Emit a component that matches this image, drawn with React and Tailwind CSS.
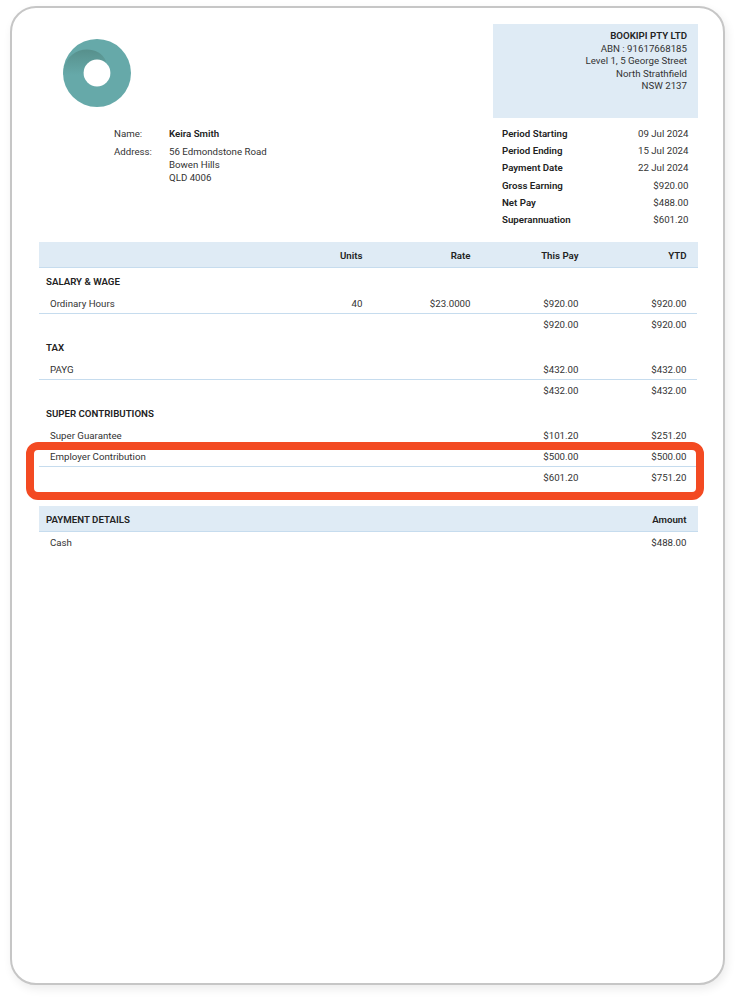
import React from 'react'

const summary = [
  ['Period Starting', '09 Jul 2024'],
  ['Period Ending', '15 Jul 2024'],
  ['Payment Date', '22 Jul 2024'],
  ['Gross Earning', '$920.00'],
  ['Net Pay', '$488.00'],
  ['Superannuation', '$601.20'],
]

const cols = 'grid grid-cols-[215.5px_108px_108px_108px_108px] items-center text-right'

function Logo() {
  return (
    <svg width="68" height="68" viewBox="0 0 68 68">
      <defs>
        <linearGradient id="shade" x1="0" y1="0" x2="0" y2="1">
          <stop offset="0" stopColor="#57908c" />
          <stop offset="1" stopColor="#66a9a9" />
        </linearGradient>
      </defs>
      <circle cx="34" cy="34" r="34" fill="#66a9a9" />
      <path d="M0.6 30C3 18 13 10.5 24 10.5C32 10.5 39 14 43 22L34 36L0.5 36Z" fill="url(#shade)" />
      <circle cx="34" cy="34" r="13.4" fill="#ffffff" />
    </svg>
  )
}

function HeaderRow({ label, units, rate, pay, ytd }) {
  return (
    <div className={`${cols} h-[26px] bg-[#dfebf5] border-b border-[#c6dcee] pt-[1px] font-semibold text-[#222]`}>
      <div className="pl-[7px] text-left">{label}</div>
      <div>{units}</div>
      <div>{rate}</div>
      <div>{pay}</div>
      <div>{ytd}</div>
    </div>
  )
}

function SectionTitle({ children, className = 'h-[24px]' }) {
  return <div className={`flex items-center pl-[7px] pt-[1px] font-semibold text-[#222] ${className}`}>{children}</div>
}

function Row({ label, units, rate, pay, ytd, line, className = 'h-[21px]' }) {
  return (
    <div className={`${cols} w-[658px] ${className} ${line ? 'border-b border-[#c6dcee]' : ''}`}>
      <div className="pl-[11px] text-left">{label}</div>
      <div>{units}</div>
      <div>{rate}</div>
      <div>{pay}</div>
      <div>{ytd}</div>
    </div>
  )
}

export default function App() {
  return (
    <div className="relative h-[999px] w-[736px] overflow-hidden bg-white pl-[10px] pt-[6px] font-[Roboto,sans-serif] text-[9.7px] leading-[13px] text-[#333]">
      <div className="h-[979px] w-[715px] rounded-[26px] border-2 border-[#c6c6c6] bg-white pl-[27px] pt-[16px] shadow-[2px_4px_10px_rgba(0,0,0,0.08)]">
        <div className="flex w-[659px] items-start justify-between">
          <div className="ml-[24px] mt-[15px]">
            <Logo />
          </div>
          <div className="h-[94px] w-[205px] bg-[#dfebf5] pr-[11px] pt-[6px] text-right leading-[12.6px]">
            <div className="font-semibold text-[#222]">BOOKIPI PTY LTD</div>
            <div>ABN : 91617668185</div>
            <div>Level 1, 5 George Street</div>
            <div>North Strathfield</div>
            <div>NSW 2137</div>
          </div>
        </div>

        <div className="mt-[7px] flex w-[659px] items-start justify-between">
          <div className="ml-[75px] mt-[1.5px] grid grid-cols-[55px_auto] gap-y-[5px]">
            <div>Name:</div>
            <div className="font-semibold text-[#222]">Keira Smith</div>
            <div>Address:</div>
            <div>
              56 Edmondstone Road
              <br />
              Bowen Hills
              <br />
              QLD 4006
            </div>
          </div>
          <div className="w-[196px] pr-[9.5px]">
            {summary.map(([k, v]) => (
              <div key={k} className="flex h-[17.2px] items-center justify-between">
                <span className="font-semibold text-[#222]">{k}</span>
                <span>{v}</span>
              </div>
            ))}
          </div>
        </div>

        <div className="mt-[14px] w-[659px]">
          <HeaderRow units="Units" rate="Rate" pay="This Pay" ytd="YTD" />
          <SectionTitle className="h-[25px]">SALARY &amp; WAGE</SectionTitle>
          <Row label="Ordinary Hours" units="40" rate="$23.0000" pay="$920.00" ytd="$920.00" line />
          <Row pay="$920.00" ytd="$920.00" />
          <SectionTitle>TAX</SectionTitle>
          <Row label="PAYG" pay="$432.00" ytd="$432.00" line />
          <Row pay="$432.00" ytd="$432.00" />
          <SectionTitle>SUPER CONTRIBUTIONS</SectionTitle>
          <Row label="Super Guarantee" pay="$101.20" ytd="$251.20" />
          <Row label="Employer Contribution" pay="$500.00" ytd="$500.00" line />
          <Row pay="$601.20" ytd="$751.20" className="h-[20px]" />
          <div className="mt-[19px]">
            <HeaderRow label="PAYMENT DETAILS" ytd="Amount" />
          </div>
          <Row label="Cash" ytd="$488.00" />
        </div>
      </div>
      <div className="absolute left-[26px] top-[442px] h-[58px] w-[678px] rounded-[12px] border-[8px] border-[#f34a22]" />
    </div>
  )
}
